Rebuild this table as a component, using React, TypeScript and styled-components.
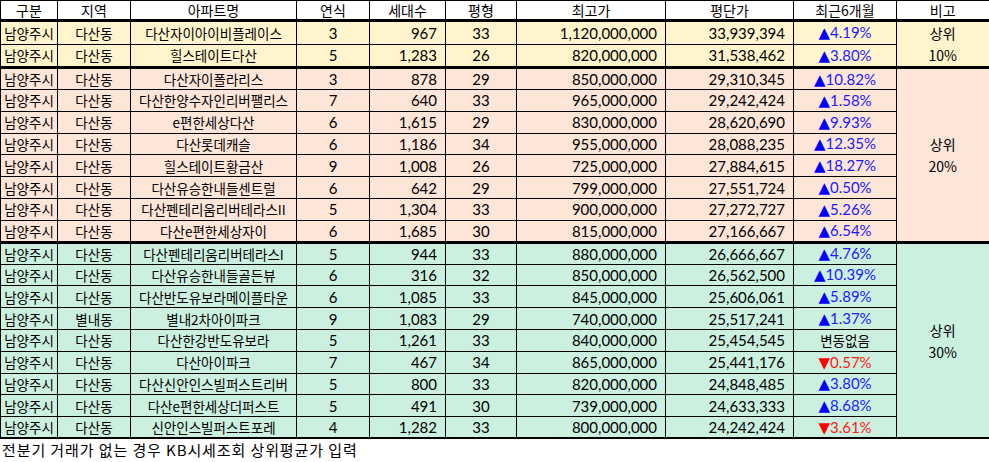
import * as React from 'react';
import styled, { createGlobalStyle } from 'styled-components';

const GlobalStyle = createGlobalStyle`
  html, body {
    margin: 0;
    padding: 0;
    background: #ffffff;
  }
  body {
    font-family: "Noto Sans CJK KR", "Noto Sans", sans-serif;
    color: #000000;
  }
`;

type Align = 'left' | 'center' | 'right';
type Trend = 'up' | 'down' | 'none';

interface AptRow {
  city: string;
  dong: string;
  name: string;
  age: number;
  units: string;
  size: number;
  top: string;
  perPyeong: string;
  trend: Trend;
  change: string;
}

interface Group {
  label: string[];
  bg: string;
  rows: AptRow[];
}

const GROUPS: Group[] = [
  {
    label: ['상위', '10%'],
    bg: '#fff4cc',
    rows: [
      { city: '남양주시', dong: '다산동', name: '다산자이아이비플레이스', age: 3, units: '967', size: 33, top: '1,120,000,000', perPyeong: '33,939,394', trend: 'up', change: '4.19%' },
      { city: '남양주시', dong: '다산동', name: '힐스테이트다산', age: 5, units: '1,283', size: 26, top: '820,000,000', perPyeong: '31,538,462', trend: 'up', change: '3.80%' },
    ],
  },
  {
    label: ['상위', '20%'],
    bg: '#fde5d8',
    rows: [
      { city: '남양주시', dong: '다산동', name: '다산자이폴라리스', age: 3, units: '878', size: 29, top: '850,000,000', perPyeong: '29,310,345', trend: 'up', change: '10.82%' },
      { city: '남양주시', dong: '다산동', name: '다산한양수자인리버팰리스', age: 7, units: '640', size: 33, top: '965,000,000', perPyeong: '29,242,424', trend: 'up', change: '1.58%' },
      { city: '남양주시', dong: '다산동', name: 'e편한세상다산', age: 6, units: '1,615', size: 29, top: '830,000,000', perPyeong: '28,620,690', trend: 'up', change: '9.93%' },
      { city: '남양주시', dong: '다산동', name: '다산롯데캐슬', age: 6, units: '1,186', size: 34, top: '955,000,000', perPyeong: '28,088,235', trend: 'up', change: '12.35%' },
      { city: '남양주시', dong: '다산동', name: '힐스테이트황금산', age: 9, units: '1,008', size: 26, top: '725,000,000', perPyeong: '27,884,615', trend: 'up', change: '18.27%' },
      { city: '남양주시', dong: '다산동', name: '다산유승한내들센트럴', age: 6, units: '642', size: 29, top: '799,000,000', perPyeong: '27,551,724', trend: 'up', change: '0.50%' },
      { city: '남양주시', dong: '다산동', name: '다산펜테리움리버테라스II', age: 5, units: '1,304', size: 33, top: '900,000,000', perPyeong: '27,272,727', trend: 'up', change: '5.26%' },
      { city: '남양주시', dong: '다산동', name: '다산e편한세상자이', age: 6, units: '1,685', size: 30, top: '815,000,000', perPyeong: '27,166,667', trend: 'up', change: '6.54%' },
    ],
  },
  {
    label: ['상위', '30%'],
    bg: '#ccf0e0',
    rows: [
      { city: '남양주시', dong: '다산동', name: '다산펜테리움리버테라스I', age: 5, units: '944', size: 33, top: '880,000,000', perPyeong: '26,666,667', trend: 'up', change: '4.76%' },
      { city: '남양주시', dong: '다산동', name: '다산유승한내들골든뷰', age: 6, units: '316', size: 32, top: '850,000,000', perPyeong: '26,562,500', trend: 'up', change: '10.39%' },
      { city: '남양주시', dong: '다산동', name: '다산반도유보라메이플타운', age: 6, units: '1,085', size: 33, top: '845,000,000', perPyeong: '25,606,061', trend: 'up', change: '5.89%' },
      { city: '남양주시', dong: '별내동', name: '별내2차아이파크', age: 9, units: '1,083', size: 29, top: '740,000,000', perPyeong: '25,517,241', trend: 'up', change: '1.37%' },
      { city: '남양주시', dong: '다산동', name: '다산한강반도유보라', age: 5, units: '1,261', size: 33, top: '840,000,000', perPyeong: '25,454,545', trend: 'none', change: '변동없음' },
      { city: '남양주시', dong: '다산동', name: '다산아이파크', age: 7, units: '467', size: 34, top: '865,000,000', perPyeong: '25,441,176', trend: 'down', change: '0.57%' },
      { city: '남양주시', dong: '다산동', name: '다산신안인스빌퍼스트리버', age: 5, units: '800', size: 33, top: '820,000,000', perPyeong: '24,848,485', trend: 'up', change: '3.80%' },
      { city: '남양주시', dong: '다산동', name: '다산e편한세상더퍼스트', age: 5, units: '491', size: 30, top: '739,000,000', perPyeong: '24,633,333', trend: 'up', change: '8.68%' },
      { city: '남양주시', dong: '다산동', name: '신안인스빌퍼스트포레', age: 4, units: '1,282', size: 33, top: '800,000,000', perPyeong: '24,242,424', trend: 'down', change: '3.61%' },
    ],
  },
];

const COLUMNS = [
  { title: '구분', width: 57 },
  { title: '지역', width: 73 },
  { title: '아파트명', width: 166 },
  { title: '연식', width: 73 },
  { title: '세대수', width: 76 },
  { title: '평형', width: 71 },
  { title: '최고가', width: 149 },
  { title: '평단가', width: 128 },
  { title: '최근6개월', width: 103 },
  { title: '비고', width: 93 },
];

const Sheet = styled.div`
  width: 989px;
  display: flex;
  flex-direction: column;
`;

const Table = styled.table`
  border-collapse: collapse;
  table-layout: fixed;
  width: 989px;
  border-right: 2px solid #000;
  border-bottom: 2px solid #000;
`;

const HeadRow = styled.tr`
  height: 20px;
`;

const HeadCell = styled.th`
  padding: 0;
  border: 1px solid #000;
  background: #ffffff;
  font-weight: 400;
  font-size: 14px;
  line-height: 16px;
  text-align: center;
  white-space: nowrap;
`;

const BodyRow = styled.tr<{ $bg: string; $first: boolean }>`
  height: ${(p) => (p.$first ? '22px' : '21.8px')};
  background: ${(p) => p.$bg};
  td {
    border-top: ${(p) => (p.$first ? '3px solid #000' : '1px solid #000')};
  }
`;

const Cell = styled.td<{ $align?: Align; $num?: boolean }>`
  padding: ${(p) => (p.$align === 'right' ? '0 8px 0 0' : '0')};
  border: 1px solid #000;
  font-size: ${(p) => (p.$num ? '15px' : '13.5px')};
  font-family: ${(p) => (p.$num ? '"Lato", "Noto Sans CJK KR", sans-serif' : '"Noto Sans CJK KR", "Noto Sans", sans-serif')};
  line-height: 16px;
  text-align: ${(p) => p.$align ?? 'center'};
  vertical-align: middle;
  white-space: nowrap;
  overflow: hidden;
`;

const NoteCell = styled.td`
  padding: 0;
  border: 1px solid #000;
  border-top: 3px solid #000;
  font-size: 14px;
  line-height: 22px;
  text-align: center;
  vertical-align: middle;
`;

const Change = styled.span<{ $trend: Trend }>`
  font-size: ${(p) => (p.$trend === 'none' ? '13.5px' : '15px')};
  font-family: ${(p) => (p.$trend === 'none' ? '"Noto Sans CJK KR", sans-serif' : '"Lato", "Noto Sans CJK KR", sans-serif')};
  line-height: 16px;
  color: ${(p) => (p.$trend === 'up' ? '#1a1aff' : p.$trend === 'down' ? '#ff1a1a' : '#000')};
`;

const Arrow = styled.span<{ $trend: Trend }>`
  font-family: "DejaVu Sans", sans-serif;
  font-size: 15px;
  line-height: 16px;
  color: ${(p) => (p.$trend === 'up' ? '#0000ff' : '#ff0000')};
`;

const Footnote = styled.div`
  padding: 1px 0 0 2px;
  font-size: 15px;
  line-height: 20px;
  letter-spacing: 0.9px;
  color: #000;
`;

const ChangeText: React.FC<{ trend: Trend; change: string }> = ({ trend, change }) => (
  <Change $trend={trend}>
    {trend === 'up' && <Arrow $trend={trend}>▲</Arrow>}
    {trend === 'down' && <Arrow $trend={trend}>▼</Arrow>}
    {change}
  </Change>
);

const App: React.FC = () => (
  <>
    <GlobalStyle />
    <Sheet>
      <Table>
        <colgroup>
          {COLUMNS.map((c) => <col key={c.title} style={{ width: c.width }} />)}
        </colgroup>
        <thead>
          <HeadRow>
            {COLUMNS.map((c) => <HeadCell key={c.title}>{c.title}</HeadCell>)}
          </HeadRow>
        </thead>
        <tbody>
          {GROUPS.map((group) => group.rows.map((row, i) => (
            <BodyRow key={row.name} $bg={group.bg} $first={i === 0}>
              <Cell>{row.city}</Cell>
              <Cell>{row.dong}</Cell>
              <Cell>{row.name}</Cell>
              <Cell $num>{row.age}</Cell>
              <Cell $num $align="right">{row.units}</Cell>
              <Cell $num>{row.size}</Cell>
              <Cell $num $align="right">{row.top}</Cell>
              <Cell $num $align="right">{row.perPyeong}</Cell>
              <Cell><ChangeText trend={row.trend} change={row.change} /></Cell>
              {i === 0 && (
                <NoteCell rowSpan={group.rows.length}>
                  {group.label[0]}
                  <br />
                  {group.label[1]}
                </NoteCell>
              )}
            </BodyRow>
          )))}
        </tbody>
      </Table>
      <Footnote>전분기 거래가 없는 경우 KB시세조회 상위평균가 입력</Footnote>
    </Sheet>
  </>
);

export default App;
